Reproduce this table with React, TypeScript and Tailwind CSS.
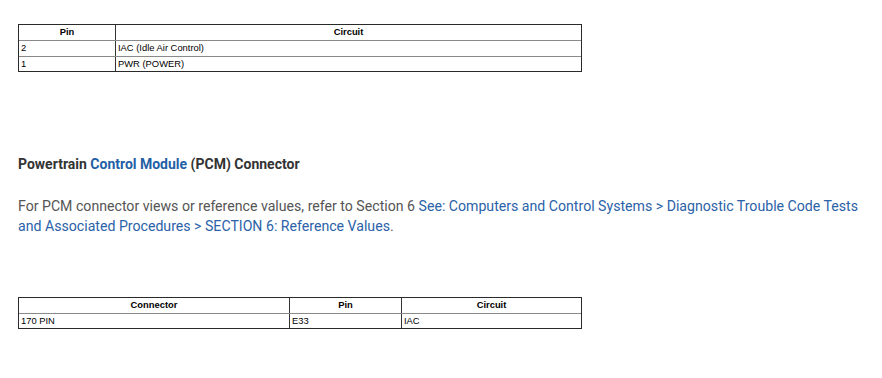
export default function App() {
  const cell = "px-[2px] text-[9.4px] leading-[14px] text-black";
  const tfont = { fontFamily: '"Liberation Sans", Arial, sans-serif' };
  return (
    <div className="bg-white w-[882px] h-[378px] pl-[18px] pt-[24px]" style={{ fontFamily: 'Roboto, "Noto Sans", sans-serif' }}>
      <div className="w-[564px] border-[1.5px] border-[#2a2a2a]" style={tfont}>
        <div className="grid grid-cols-[97px_1fr] h-[15px]">
          <div className={`${cell} font-bold text-center border-r border-[#333]`}>Pin</div>
          <div className={`${cell} font-bold text-center`}>Circuit</div>
        </div>
        <div className="grid grid-cols-[97px_1fr] h-[16px] border-t-[1.5px] border-[#8a8a8a]">
          <div className={`${cell} border-r border-[#333]`}>2</div>
          <div className={cell}>IAC (Idle Air Control)</div>
        </div>
        <div className="grid grid-cols-[97px_1fr] h-[15px] border-t-[1.5px] border-[#8a8a8a]">
          <div className={`${cell} border-r border-[#333]`}>1</div>
          <div className={cell}>PWR (POWER)</div>
        </div>
      </div>

      <h3 className="mt-[82px] text-[14px] leading-[20px] font-bold text-[#333]">
        Powertrain <span className="text-[#1f5fa6]">Control Module</span> (PCM) Connector
      </h3>

      <p className="mt-[22px] w-[850px] text-[14.14px] leading-[20px] text-[#555]">
        For PCM connector views or reference values, refer to Section 6{" "}
        <span className="text-[#2b62a8]">
          See: Computers and Control Systems &gt; Diagnostic Trouble Code Tests and Associated Procedures &gt; SECTION 6: Reference Values
        </span>
        .
      </p>

      <div className="mt-[61px] w-[564px] border-[1.5px] border-[#2a2a2a]" style={tfont}>
        <div className="grid grid-cols-[271px_112px_1fr] h-[15px]">
          <div className={`${cell} font-bold text-center border-r border-[#333]`}>Connector</div>
          <div className={`${cell} font-bold text-center border-r border-[#333]`}>Pin</div>
          <div className={`${cell} font-bold text-center`}>Circuit</div>
        </div>
        <div className="grid grid-cols-[271px_112px_1fr] h-[15px] border-t-[1.5px] border-[#8a8a8a]">
          <div className={`${cell} border-r border-[#333]`}>170 PIN</div>
          <div className={`${cell} border-r border-[#333]`}>E33</div>
          <div className={cell}>IAC</div>
        </div>
      </div>
    </div>
  );
}
